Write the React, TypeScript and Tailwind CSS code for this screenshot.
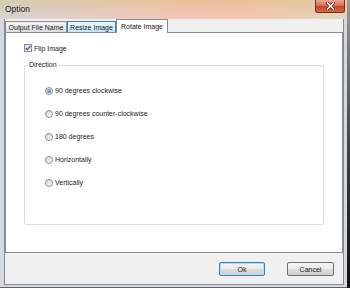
import * as React from 'react';

const tabs = [
  { label: 'Output File Name', width: 'w-[62px]', state: 'idle' },
  { label: 'Resize Image', width: 'w-[49px]', state: 'hover' },
  { label: 'Rotate Image', width: 'w-[52px]', state: 'active' },
];

const directions = [
  '90 degrees clockwise',
  '90 degrees counter-clockwise',
  '180 degrees',
  'Horizontally',
  'Vertically',
];

function Radio({ checked }: { checked?: boolean }) {
  return (
    <div className="flex h-[8px] w-[8px] items-center justify-center rounded-full border border-[#8e8f8f] bg-[linear-gradient(135deg,#d6d6d6,#fbfbfb)]">
      {checked && <div className="h-[4px] w-[4px] rounded-full bg-[radial-gradient(circle_at_35%_35%,#8fc3f0,#1c5a9c)]" />}
    </div>
  );
}

function Button({ label, primary }: { label: string; primary?: boolean }) {
  return (
    <div
      className={
        'flex h-[14px] items-center justify-center rounded-[2px] border bg-[linear-gradient(180deg,#f3f3f3_0%,#ebebeb_50%,#dddddd_51%,#cfcfcf_100%)] ' +
        (primary ? 'w-[46px] border-[#3c7fb1] shadow-[inset_0_0_0_1px_#b9dcf5]' : 'w-[47px] border-[#707070]')
      }
    >
      {label}
    </div>
  );
}

export default function App() {
  return (
    <div className="flex h-[288px] w-[350px] overflow-hidden bg-[#2b2b2b] font-['Liberation_Sans',Arial,sans-serif] text-[7px] leading-none text-[#1a1a1a]">
      <div className="flex w-[347px] flex-col border-b border-[#5f6368] bg-[#d6d9dc]">
        {/* title bar */}
        <div className="flex h-[19px] items-start justify-between bg-[linear-gradient(180deg,rgba(230,215,150,0.35),rgba(255,255,255,0.25)),linear-gradient(90deg,#cbc6c3_0%,#dbbfb3_25%,#eeb4a0_50%,#f0b39c_70%,#e4bfa0_88%,#d6cbb0_100%)]">
          <span className="pl-[5px] pt-[5px] text-[8.5px] text-[#202020]">Option</span>
          <div className="mr-[2px] flex h-[13px] w-[30px] items-center justify-center rounded-b-[3px] border border-t-0 border-[#7a2b20] bg-[linear-gradient(180deg,#eba895_0%,#dc6f55_45%,#c8452c_55%,#d06a48_100%)]">
            <svg width="9" height="8" viewBox="0 0 9 8">
              <path d="M1.5 1 L7.5 7 M7.5 1 L1.5 7" stroke="#5a2a22" strokeWidth="3" strokeLinecap="square" />
              <path d="M1.5 1 L7.5 7 M7.5 1 L1.5 7" stroke="#ffffff" strokeWidth="1.4" strokeLinecap="square" />
            </svg>
          </div>
        </div>

        {/* client area */}
        <div className="ml-[4px] mr-[3px] flex h-[266px] flex-col border-x border-b border-[#7f8a94] bg-[#f0f0f0]">
          <div className="flex h-[13px] items-end">
            {tabs.map(t => (
              <div
                key={t.label}
                className={
                  'flex items-center justify-center border-x border-t ' +
                  t.width +
                  (t.state === 'active'
                    ? ' relative z-10 -mb-px h-[14px] border-[#898c95] bg-white'
                    : t.state === 'hover'
                      ? ' h-[11px] border-[#3c7fb1] bg-[linear-gradient(180deg,#eaf6fd,#d9f0fc_50%,#bee6fd)]'
                      : ' h-[11px] border-[#898c95] bg-[linear-gradient(180deg,#f2f2f2,#ebebeb_50%,#dddddd)]')
                }
              >
                {t.label}
              </div>
            ))}
          </div>

          {/* tab panel */}
          <div className="flex h-[221px] flex-col border border-[#898c95] bg-white pl-[18px] pt-[11px]">
            <div className="flex h-[8px] items-center gap-[2px]">
              <div className="flex h-[8px] w-[8px] items-center justify-center border border-[#8e8f8f] bg-[linear-gradient(135deg,#dcdcdc,#fbfbfb)]">
                <svg width="6" height="6" viewBox="0 0 6 6">
                  <path d="M0.8 3.2 L2.3 4.8 L5.3 0.8" fill="none" stroke="#3b5ea8" strokeWidth="1.3" />
                </svg>
              </div>
              <span>Flip Image</span>
            </div>

            <fieldset className="mt-[9px] h-[164px] w-[300px] rounded-[2px] border border-[#d5dfe5]">
              <legend className="ml-[3px] px-[1px] leading-[8px]">Direction</legend>
              <div className="flex flex-col pl-[20px] pt-[10px]">
                {directions.map((d, i) => (
                  <div key={d} className="flex h-[23px] items-center gap-[2px]">
                    <Radio checked={i === 0} />
                    <span>{d}</span>
                  </div>
                ))}
              </div>
            </fieldset>
          </div>

          {/* button bar */}
          <div className="flex h-[31px] justify-end gap-[22px] pr-[9px] pt-[9px]">
            <Button label="Ok" primary />
            <Button label="Cancel" />
          </div>
        </div>
      </div>
      <div className="w-[3px] bg-gradient-to-b from-[#9a9a9a] via-[#444444] to-[#111111]" />
    </div>
  );
}
